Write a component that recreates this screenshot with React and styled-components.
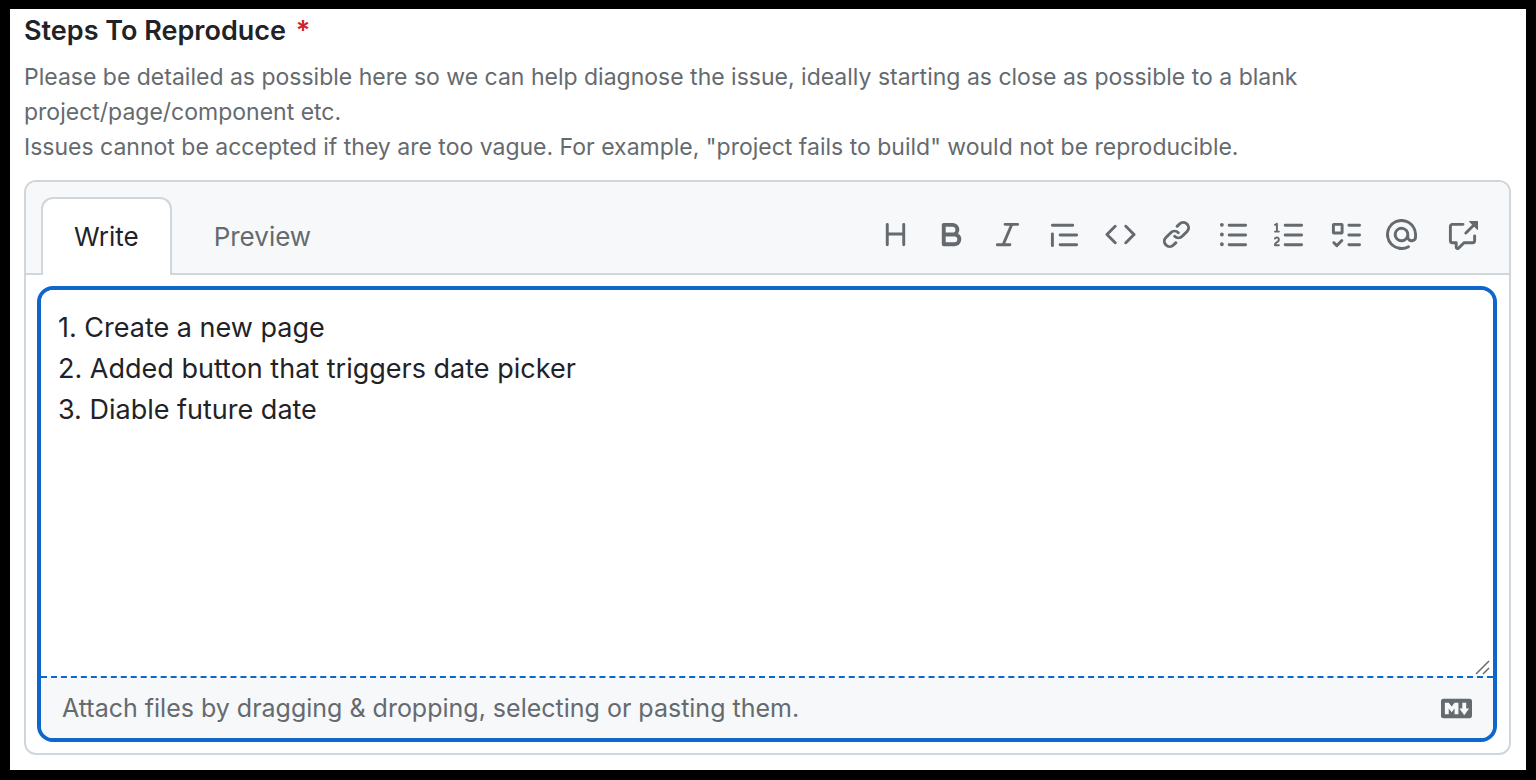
import React, { useState } from 'react';
import styled, { createGlobalStyle, ThemeProvider } from 'styled-components';

const theme = {
  colors: {
    text: '#1f2328',
    muted: '#656a6f',
    border: '#d0d7dc',
    subtle: '#f6f8fa',
    accent: '#0f66cb',
    danger: '#cf222e',
    white: '#ffffff',
  },
  font: `Inter, 'Liberation Sans', sans-serif`,
};

const color = name => props => props.theme.colors[name];

const GlobalStyle = createGlobalStyle`
  body {
    margin: 0;
    background: #000;
  }

  *,
  *::before,
  *::after {
    box-sizing: border-box;
  }

  button,
  textarea {
    font: inherit;
  }
`;

const Frame = styled.main`
  display: flex;
  flex-direction: column;
  min-height: 100vh;
  padding: 4px 15px 15px 14px;
  border: solid 10px #000;
  border-top-width: 9px;
  background: ${color('white')};
  color: ${color('text')};
  font-family: ${props => props.theme.font};
`;

const Title = styled.label`
  font-size: 27px;
  font-weight: 600;
  line-height: 36px;
`;

const Required = styled.span`
  margin-left: 3px;
  color: ${color('danger')};
`;

const Description = styled.p`
  margin: 11px 0 15px;
  color: ${color('muted')};
  font-size: 23px;
  line-height: 35px;
`;

const Panel = styled.section`
  display: flex;
  flex: 1;
  flex-direction: column;
  border: solid 2px ${color('border')};
  border-radius: 12px;
`;

const PanelHeader = styled.header`
  display: flex;
  justify-content: space-between;
  padding: 15px 19px 0 15px;
  border-bottom: solid 2px ${color('border')};
  border-radius: 10px 10px 0 0;
  background: ${color('subtle')};
`;

const Tabs = styled.div`
  display: flex;
  margin-bottom: -2px;
`;

const Tab = styled.button`
  height: 78px;
  padding: 0 ${props => (props.$active ? 31 : 40)}px 2px;
  border: solid 2px ${props => (props.$active ? props.theme.colors.border : 'transparent')};
  border-bottom: 0;
  border-radius: 12px 12px 0 0;
  background: ${props => (props.$active ? props.theme.colors.white : 'transparent')};
  color: ${props => (props.$active ? props.theme.colors.text : props.theme.colors.muted)};
  font-size: 26px;
  cursor: pointer;
`;

const Toolbar = styled.div`
  display: flex;
  align-items: center;
  gap: 1px;
  padding-bottom: 2px;
`;

const ToolGroup = styled.div`
  display: flex;
  margin-left: ${props => (props.$spaced ? 4 : 0)}px;
`;

const ToolButton = styled.button`
  display: grid;
  place-items: center;
  width: 56px;
  height: 56px;
  padding: 0;
  border: 0;
  border-radius: 12px;
  background: none;
  color: ${color('muted')};
  cursor: pointer;
`;

const PanelBody = styled.div`
  display: flex;
  flex: 1;
  padding: 11px 12px 11px 11px;
`;

const Editor = styled.div`
  display: flex;
  flex: 1;
  flex-direction: column;
  overflow: hidden;
  border: solid 4px ${color('accent')};
  border-radius: 16px;
`;

const TextWrap = styled.div`
  position: relative;
  display: flex;
  flex: 1;
`;

const TextArea = styled.textarea`
  flex: 1;
  min-height: 200px;
  padding: 17px;
  border: 0;
  outline: 0;
  background: ${color('white')};
  color: ${color('text')};
  font-size: 27px;
  line-height: 41px;
  resize: none;
`;

const Grip = styled.svg`
  position: absolute;
  right: 3px;
  bottom: 1px;
  color: ${color('muted')};
  pointer-events: none;
`;

const Footer = styled.footer`
  display: flex;
  align-items: center;
  justify-content: space-between;
  height: 62px;
  padding: 0 21px;
  border-top: dashed 2px ${color('accent')};
  background: ${color('subtle')};
`;

const AttachLabel = styled.label`
  color: ${color('muted')};
  font-size: 25px;
  line-height: 36px;
  cursor: pointer;
`;

const MarkdownLink = styled.a`
  display: flex;
  color: ${color('muted')};
`;

const paths = {
  heading:
    'M3.75 2a.75.75 0 0 1 .75.75V7h7V2.75a.75.75 0 0 1 1.5 0v10.5a.75.75 0 0 1-1.5 0V8.5h-7v4.75a.75.75 0 0 1-1.5 0V2.75A.75.75 0 0 1 3.75 2Z',
  bold:
    'M4 2h4.5a3.501 3.501 0 0 1 2.852 5.53A3.499 3.499 0 0 1 9.5 14H4a1 1 0 0 1-1-1V3a1 1 0 0 1 1-1Zm1 7v3h4.5a1.5 1.5 0 0 0 0-3Zm3.5-2a1.5 1.5 0 0 0 0-3H5v3Z',
  italic:
    'M6 2.75A.75.75 0 0 1 6.75 2h6.5a.75.75 0 0 1 0 1.5h-2.505l-3.858 9H9.25a.75.75 0 0 1 0 1.5h-6.5a.75.75 0 0 1 0-1.5h2.505l3.858-9H6.75A.75.75 0 0 1 6 2.75Z',
  quote:
    'M1.75 2.5h10.5a.75.75 0 0 1 0 1.5H1.75a.75.75 0 0 1 0-1.5Zm4 5h8.5a.75.75 0 0 1 0 1.5h-8.5a.75.75 0 0 1 0-1.5Zm0 5h8.5a.75.75 0 0 1 0 1.5h-8.5a.75.75 0 0 1 0-1.5ZM2.5 7.75v6a.75.75 0 0 1-1.5 0v-6a.75.75 0 0 1 1.5 0Z',
  code:
    'm11.28 3.22 4.25 4.25a.75.75 0 0 1 0 1.06l-4.25 4.25a.749.749 0 0 1-1.275-.326.749.749 0 0 1 .215-.734L13.94 8l-3.72-3.72a.749.749 0 0 1 .326-1.275.749.749 0 0 1 .734.215Zm-6.56 0a.751.751 0 0 1 1.042.018.751.751 0 0 1 .018 1.042L2.06 8l3.72 3.72a.749.749 0 0 1-.326 1.275.749.749 0 0 1-.734-.215L.47 8.53a.75.75 0 0 1 0-1.06Z',
  link:
    'm7.775 3.275 1.25-1.25a3.5 3.5 0 1 1 4.95 4.95l-2.5 2.5a3.5 3.5 0 0 1-4.95 0 .751.751 0 0 1 .018-1.042.751.751 0 0 1 1.042-.018 1.998 1.998 0 0 0 2.83 0l2.5-2.5a2.002 2.002 0 0 0-2.83-2.83l-1.25 1.25a.751.751 0 0 1-1.042-.018.751.751 0 0 1-.018-1.042Zm-4.69 9.64a1.998 1.998 0 0 0 2.83 0l1.25-1.25a.751.751 0 0 1 1.042.018.751.751 0 0 1 .018 1.042l-1.25 1.25a3.5 3.5 0 1 1-4.95-4.95l2.5-2.5a3.5 3.5 0 0 1 4.95 0 .751.751 0 0 1-.018 1.042.751.751 0 0 1-1.042.018 1.998 1.998 0 0 0-2.83 0l-2.5 2.5a1.998 1.998 0 0 0 0 2.83Z',
  bullets:
    'M5.75 2.5h8.5a.75.75 0 0 1 0 1.5h-8.5a.75.75 0 0 1 0-1.5Zm0 5h8.5a.75.75 0 0 1 0 1.5h-8.5a.75.75 0 0 1 0-1.5Zm0 5h8.5a.75.75 0 0 1 0 1.5h-8.5a.75.75 0 0 1 0-1.5ZM2 14a1 1 0 1 1 0-2 1 1 0 0 1 0 2Zm1-6a1 1 0 1 1-2 0 1 1 0 0 1 2 0ZM2 4a1 1 0 1 1 0-2 1 1 0 0 1 0 2Z',
  numbers:
    'M5 3.25a.75.75 0 0 1 .75-.75h8.5a.75.75 0 0 1 0 1.5h-8.5A.75.75 0 0 1 5 3.25Zm0 5a.75.75 0 0 1 .75-.75h8.5a.75.75 0 0 1 0 1.5h-8.5A.75.75 0 0 1 5 8.25Zm0 5a.75.75 0 0 1 .75-.75h8.5a.75.75 0 0 1 0 1.5h-8.5a.75.75 0 0 1-.75-.75ZM.924 10.32a.5.5 0 0 1-.851-.525l.001-.001.001-.002.002-.004.007-.011c.097-.144.215-.273.348-.384.228-.19.588-.392 1.068-.392.468 0 .858.181 1.126.484.259.294.377.673.377 1.038 0 .987-.686 1.495-1.156 1.845l-.047.035c-.303.225-.522.4-.654.597h1.357a.5.5 0 0 1 0 1H.5a.5.5 0 0 1-.5-.5c0-1.005.692-1.52 1.167-1.875l.035-.025c.531-.396.8-.625.8-1.078a.57.57 0 0 0-.128-.376C1.806 10.068 1.695 10 1.5 10a.658.658 0 0 0-.429.163.835.835 0 0 0-.144.153ZM2.003 2.5V6h.503a.5.5 0 0 1 0 1H.5a.5.5 0 0 1 0-1h.503V3.308l-.28.14a.5.5 0 0 1-.446-.895l1.003-.5a.5.5 0 0 1 .723.447Z',
  tasks:
    'M2 2h4a1 1 0 0 1 1 1v4a1 1 0 0 1-1 1H2a1 1 0 0 1-1-1V3a1 1 0 0 1 1-1Zm4.655 8.595a.75.75 0 0 1 0 1.06L4.03 14.28a.75.75 0 0 1-1.06 0l-1.5-1.5a.749.749 0 0 1 .326-1.275.749.749 0 0 1 .734.215l.97.97 2.095-2.095a.75.75 0 0 1 1.06 0ZM9.75 2.5h5.5a.75.75 0 0 1 0 1.5h-5.5a.75.75 0 0 1 0-1.5Zm0 5h5.5a.75.75 0 0 1 0 1.5h-5.5a.75.75 0 0 1 0-1.5Zm0 5h5.5a.75.75 0 0 1 0 1.5h-5.5a.75.75 0 0 1 0-1.5Zm-7.25-9v3h3v-3Z',
  mention:
    'M4.75 2.37a6.501 6.501 0 0 0 6.5 11.26.75.75 0 0 1 .75 1.298A7.999 7.999 0 0 1 .989 4.148 8 8 0 0 1 16 7.75v1.5a2.75 2.75 0 0 1-5.072 1.475 3.999 3.999 0 0 1-6.65-4.19A4 4 0 0 1 12 8v1.25a1.25 1.25 0 0 0 2.5 0V7.867a6.5 6.5 0 0 0-9.75-5.496ZM10.5 8a2.5 2.5 0 1 0-5 0 2.5 2.5 0 0 0 5 0Z',
  reference:
    'M2.75 3.5a.25.25 0 0 0-.25.25v7.5c0 .138.112.25.25.25h2a.75.75 0 0 1 .75.75v2.19l2.72-2.72a.749.749 0 0 1 .53-.22h4.5a.25.25 0 0 0 .25-.25v-2.5a.75.75 0 0 1 1.5 0v2.5A1.75 1.75 0 0 1 13.25 13H9.06l-2.573 2.573A1.458 1.458 0 0 1 4 14.543V13H2.75A1.75 1.75 0 0 1 1 11.25v-7.5C1 2.784 1.784 2 2.75 2h5.5a.75.75 0 0 1 0 1.5ZM16 1.25v4.146a.25.25 0 0 1-.427.177L14.03 4.03l-3.75 3.75a.749.749 0 0 1-1.275-.326.749.749 0 0 1 .215-.734l3.75-3.75-1.543-1.543A.25.25 0 0 1 11.604 1h4.146a.25.25 0 0 1 .25.25Z',
  markdown:
    'M14.85 3c.63 0 1.15.52 1.14 1.15v7.7c0 .63-.51 1.15-1.15 1.15H1.15C.52 13 0 12.48 0 11.84V4.15C0 3.52.52 3 1.15 3ZM9 11V5H7L5.5 7 4 5H2v6h2V8l1.5 1.92L7 8v3Zm2.99.5L14.5 8H13V5h-2v3H9.5Z',
};

const toolGroups = [
  [['heading', 'Heading'], ['bold', 'Bold'], ['italic', 'Italic']],
  [['quote', 'Quote'], ['code', 'Code'], ['link', 'Link']],
  [
    ['bullets', 'Unordered list'],
    ['numbers', 'Numbered list'],
    ['tasks', 'Task list'],
    ['mention', 'Mention'],
  ],
  [['reference', 'Reference']],
];

const steps = `1. Create a new page
2. Added button that triggers date picker
3. Diable future date`;

const Icon = ({ name }) => (
  <svg width="31" height="31" viewBox="0 0 16 16" fill="currentColor" aria-hidden="true">
    <path d={paths[name]} />
  </svg>
);

export default () => {
  const [tab, setTab] = useState('Write');
  const [value, setValue] = useState(steps);

  return (
    <ThemeProvider theme={theme}>
      <GlobalStyle />
      <Frame>
        <Title htmlFor="steps">
          Steps To Reproduce <Required>*</Required>
        </Title>
        <Description id="steps-help">
          Please be detailed as possible here so we can help diagnose the issue,
          ideally starting as close as possible to a blank
          project/page/component etc.
          <br />
          Issues cannot be accepted if they are too vague. For example,
          "project fails to build" would not be reproducible.
        </Description>
        <Panel>
          <PanelHeader>
            <Tabs role="tablist">
              {['Write', 'Preview'].map(name => (
                <Tab
                  key={name}
                  type="button"
                  role="tab"
                  aria-selected={tab === name}
                  $active={tab === name}
                  onClick={() => setTab(name)}
                >
                  {name}
                </Tab>
              ))}
            </Tabs>
            <Toolbar role="toolbar" aria-label="Formatting">
              {toolGroups.map((group, i) => (
                <ToolGroup key={group[0][0]} $spaced={i === 3}>
                  {group.map(([name, label]) => (
                    <ToolButton key={name} type="button" aria-label={label}>
                      <Icon name={name} />
                    </ToolButton>
                  ))}
                </ToolGroup>
              ))}
            </Toolbar>
          </PanelHeader>
          <PanelBody>
            <Editor>
              <TextWrap>
                <TextArea
                  id="steps"
                  aria-describedby="steps-help"
                  spellCheck={false}
                  required
                  readOnly={tab === 'Preview'}
                  value={value}
                  onChange={e => setValue(e.target.value)}
                />
                <Grip width="15" height="15" viewBox="0 0 15 15" stroke="currentColor" strokeWidth="1.5">
                  <path d="M1 14 14 1M8 14l6-6" />
                </Grip>
              </TextWrap>
              <Footer>
                <AttachLabel>
                  Attach files by dragging &amp; dropping, selecting or pasting them.
                  <input type="file" multiple hidden />
                </AttachLabel>
                <MarkdownLink href="#markdown" aria-label="Markdown is supported">
                  <Icon name="markdown" />
                </MarkdownLink>
              </Footer>
            </Editor>
          </PanelBody>
        </Panel>
      </Frame>
    </ThemeProvider>
  );
};
